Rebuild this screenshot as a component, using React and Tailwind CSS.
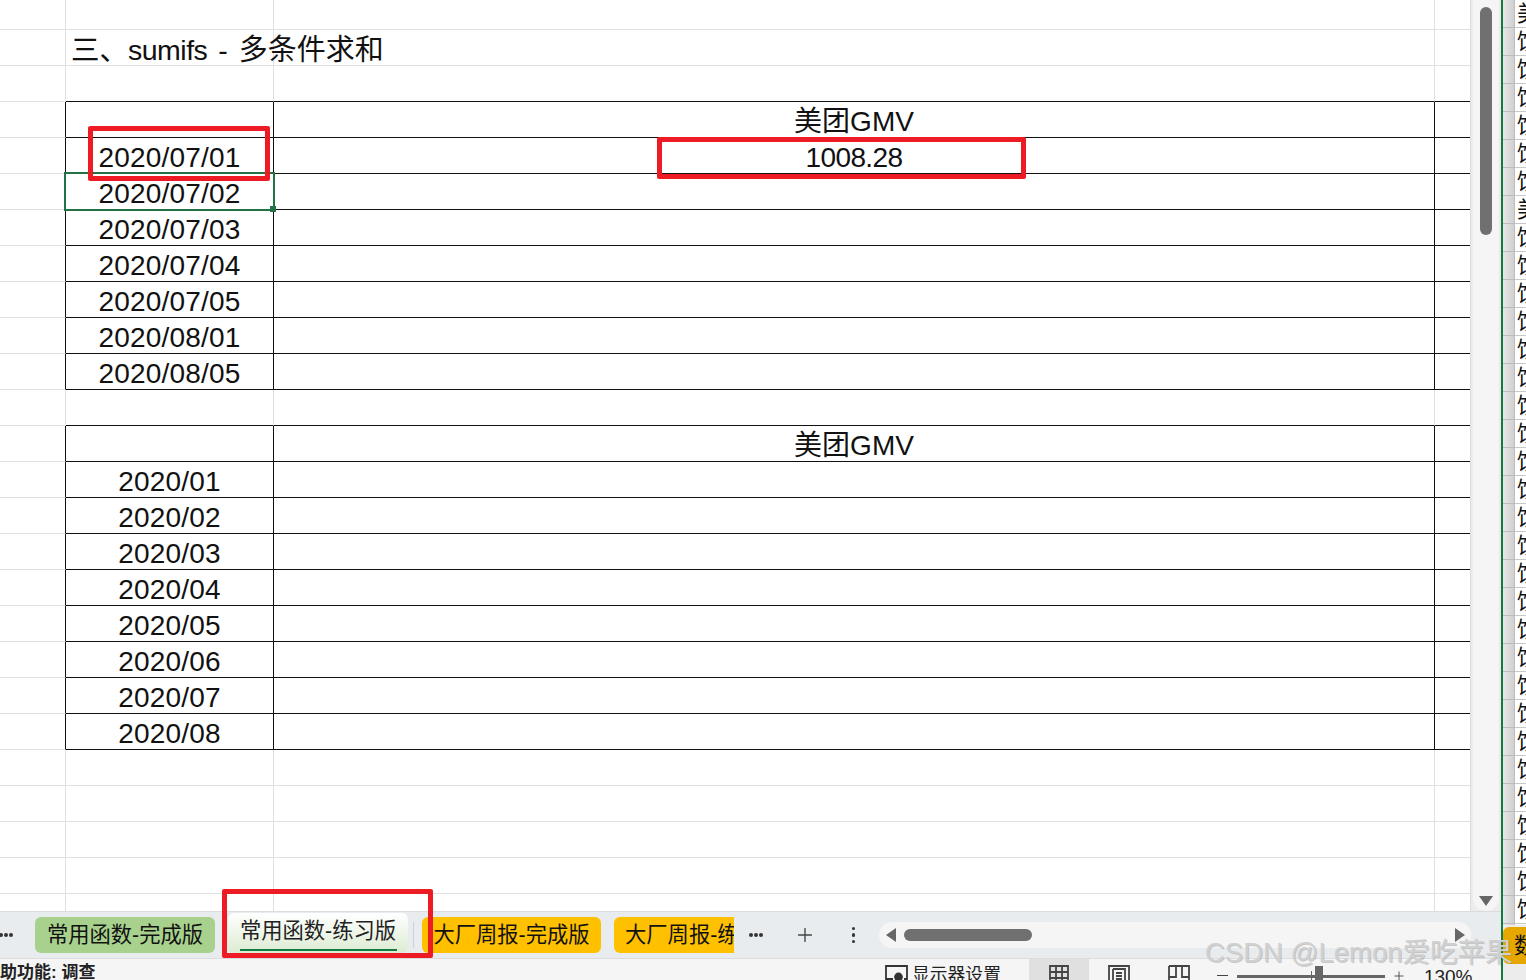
import { Plus } from "lucide-react";

const font = "font-['Liberation_Sans','Noto_Sans_CJK_SC',sans-serif]";

// one spreadsheet row: index cell, date cell, value cell, spill cell
const Row = ({ height = "h-[36px]", line = "gray", table = false, a, b }) => {
  const bottom = line === "black" ? "border-b-[#111]" : "border-b-[#e0e0e0]";
  const side = table ? "border-r-[#111]" : "border-r-[#e0e0e0]";
  return (
    <div className={`flex shrink-0 ${height}`}>
      <div className={`w-[66px] border-b border-b-[#e0e0e0] border-r ${side}`} />
      <div className={`w-[208px] border-b ${bottom} border-r ${side} flex items-end justify-center text-[28px] leading-[30px] tracking-[0.2px] text-[#111]`}>
        {a}
      </div>
      <div className={`w-[1161px] border-b ${bottom} border-r ${side} flex items-end justify-center text-[28px] leading-[30px] text-[#111]`}>
        {b}
      </div>
      <div className={`flex-1 border-b ${bottom}`} />
    </div>
  );
};

const dates = ["2020/07/01", "2020/07/02", "2020/07/03", "2020/07/04", "2020/07/05", "2020/08/01", "2020/08/05"];
const months = ["2020/01", "2020/02", "2020/03", "2020/04", "2020/05", "2020/06", "2020/07", "2020/08"];

const Dots = ({ className }) => (
  <div className={`flex gap-[1.5px] ${className}`}>
    <span className="w-[3.5px] h-[3.5px] rounded-full bg-[#333]" />
    <span className="w-[3.5px] h-[3.5px] rounded-full bg-[#333]" />
    <span className="w-[3.5px] h-[3.5px] rounded-full bg-[#333]" />
  </div>
);

const sidePanelRows = Array.from({ length: 34 }, (_, i) => (i === 0 || i === 7 ? "美" : "饮"));

export default function App() {
  return (
    <div className={`relative flex w-[1526px] h-[980px] overflow-hidden bg-white ${font}`}>
      <div className="flex flex-col w-[1501px] shrink-0">
        <div className="flex h-[912px] shrink-0 border-b border-[#dcdcdc]">
          {/* Sheet */}
          <div className="w-[1470px] flex flex-col overflow-hidden">
            <Row height="h-[30px]" />
            <div className="flex shrink-0 h-[36px] relative">
              <div className="w-[66px] border-b border-r border-[#e0e0e0]" />
              <div className="w-[208px] border-b border-r border-[#e0e0e0]" />
              <div className="w-[1161px] border-b border-r border-[#e0e0e0]" />
              <div className="flex-1 border-b border-[#e0e0e0]" />
              <span className="absolute left-[71px] top-[2px] text-[28.5px] leading-[36px] text-[#111] whitespace-nowrap [word-spacing:3px]">
                三、<span className="tracking-[-0.5px]">sumifs</span> - <span className="text-[29px]">多条件求和</span>
              </span>
            </div>
            <Row line="black" />
            <Row line="black" table b="美团GMV" />
            <Row line="black" table a={dates[0]} b={<span className="tracking-[-0.6px]">1008.28</span>} />
            {dates.slice(1).map((d) => (
              <Row key={d} line="black" table a={d} />
            ))}
            <Row line="black" />
            <Row line="black" table b="美团GMV" />
            {months.map((m) => (
              <Row key={m} line="black" table a={m} />
            ))}
            {[0, 1, 2, 3].map((i) => (
              <Row key={i} />
            ))}
            <Row height="h-[20px]" />
          </div>

          {/* Vertical scrollbar */}
          <div className="flex-1 bg-[#ececec] border-l border-[#dcdcdc] flex justify-center">
            <div className="w-[26px] h-[911px] bg-[#f5f5f5] rounded-b-[13px] flex flex-col items-center justify-between pt-[7px] pb-[5px]">
              <div className="w-[12px] h-[228px] rounded-full bg-[#707070]" />
              <div className="w-0 h-0 border-x-[7px] border-x-transparent border-t-[10px] border-t-[#666]" />
            </div>
          </div>
        </div>

        {/* Sheet tabs */}
        <div className="h-[47px] shrink-0 bg-[#e9ecee] flex items-center overflow-hidden border-b border-[#dcdcdc] text-[21.3px] text-[#111]">
          <Dots className="ml-[-1px] w-[14px] shrink-0" />
          <div className="ml-[22px] w-[180px] h-[36px] pt-[2px] rounded-md bg-[#a9d18e] flex items-center justify-center whitespace-nowrap shrink-0">
            常用函数-完成版
          </div>
          <div className="ml-[13px] w-[180px] h-[40px] mt-[-5px] rounded-md bg-gradient-to-b from-white to-[#dcebd2] flex flex-col items-center justify-between pb-[2px] shrink-0 text-[#222]">
            <span className="whitespace-nowrap leading-[36px]">常用函数-练习版</span>
            <span className="w-[157px] h-[3px] bg-[#107c41]" />
          </div>
          <div className="ml-[5px] w-px h-[26px] bg-[#cfd2d4] shrink-0" />
          <div className="ml-[8px] w-[179px] h-[36px] pt-[2px] rounded-md bg-[#ffc000] flex items-center justify-center whitespace-nowrap shrink-0">
            大厂周报-完成版
          </div>
          <div className="ml-[13px] w-[120px] h-[36px] pt-[2px] rounded-l-md bg-[#ffc000] flex items-center pl-[11px] whitespace-nowrap overflow-hidden shrink-0">
            大厂周报-练习版
          </div>
          <Dots className="ml-[15px] shrink-0" />
          <Plus className="ml-[31px] w-[22px] h-[22px] text-[#444] shrink-0" strokeWidth={1.5} />
          <div className="ml-[36px] flex flex-col gap-[3px] shrink-0">
            <span className="w-[3.5px] h-[3.5px] rounded-full bg-[#333]" />
            <span className="w-[3.5px] h-[3.5px] rounded-full bg-[#333]" />
            <span className="w-[3.5px] h-[3.5px] rounded-full bg-[#333]" />
          </div>
          {/* Horizontal scrollbar */}
          <div className="ml-[24px] w-[592px] h-[26px] rounded-full bg-[#f5f5f5] flex items-center pl-[7px] pr-[6px] shrink-0">
            <div className="w-0 h-0 border-y-[7px] border-y-transparent border-r-[10px] border-r-[#666]" />
            <div className="ml-[8px] w-[128px] h-[12px] rounded-full bg-[#707070]" />
            <div className="ml-auto w-0 h-0 border-y-[7px] border-y-transparent border-l-[10px] border-l-[#666]" />
          </div>
        </div>

        {/* Status bar */}
        <div className="h-[21px] shrink-0 bg-[#f5f5f5] flex overflow-hidden text-[#222]">
          <div className="w-[885px] shrink-0 overflow-hidden">
            <span className="block ml-[-17px] mt-[4px] text-[17px] leading-[20px] font-bold whitespace-nowrap">辅助功能: 调查</span>
          </div>
          <div className="mt-[6px] flex items-start shrink-0">
            <svg width="23" height="20" viewBox="0 0 23 20" fill="none" stroke="#333" strokeWidth="1.8">
              <path d="M8 14H1V1h21v13h-3" />
              <circle cx="13.5" cy="12" r="3.5" fill="#333" />
            </svg>
            <span className="ml-[4px] text-[17.8px] leading-[20px] whitespace-nowrap">显示器设置</span>
          </div>
          <div className="ml-[28px] w-[60px] bg-[#e0e0e0] flex justify-center pt-[6px] shrink-0">
            <svg width="20" height="22" viewBox="0 0 20 22" fill="none" stroke="#444" strokeWidth="1.8">
              <path d="M1 1h18v20H1zM1 7h18M1 13h18M7 1v20M13 1v20" />
            </svg>
          </div>
          <div className="w-[60px] flex justify-center pt-[6px] shrink-0">
            <svg width="22" height="22" viewBox="0 0 22 22" fill="none" stroke="#444" strokeWidth="1.8">
              <path d="M1 1h20v20H1zM5 4h12v17M5 4v17M8 8h6M8 11h6M8 14h6" />
            </svg>
          </div>
          <div className="w-[60px] flex justify-center pt-[6px] shrink-0">
            <svg width="22" height="22" viewBox="0 0 22 22" fill="none" stroke="#444" strokeWidth="1.8">
              <path d="M1 1h20v20M1 1v20M8 1v11H1M14 1v11h7" />
            </svg>
          </div>
          <div className="ml-[8px] mt-[15.5px] w-[11px] h-[1.5px] bg-[#444] shrink-0" />
          <div className="relative ml-[9px] mt-[16px] w-[148px] h-[2.5px] bg-[#666] shrink-0">
            <span className="absolute left-[74px] top-[-4px] w-px h-[9px] bg-[#666]" />
            <span className="absolute left-[78px] top-[-9px] w-[8px] h-[14px] bg-[#666]" />
          </div>
          <Plus className="ml-[7px] mt-[10px] w-[14px] h-[14px] text-[#444] shrink-0" strokeWidth={1.5} />
          <span className="ml-[18px] mt-[7px] text-[19px] leading-[22px] whitespace-nowrap">130%</span>
        </div>
      </div>

      <div className="w-[2px] bg-[#107c41] shrink-0" />

      {/* Neighbouring window */}
      <div className="flex-1 relative overflow-hidden bg-[#ececec]">
        <div className="h-[925px] overflow-hidden bg-white">
          {sidePanelRows.map((c, i) => (
            <div key={i} className="flex h-[28px]">
              <div className="w-[12px] shrink-0 bg-gradient-to-r from-[#e8e8e8] to-[#d0d0d0] border-b border-r border-[#bdbdbd]" />
              <div className="flex-1 border-b border-[#c8c8c8] text-[22px] leading-[28px] pl-[2px] overflow-hidden whitespace-nowrap text-[#111]">
                {c}
              </div>
            </div>
          ))}
        </div>
        <div className="absolute left-0 top-[927px] w-full h-[37px] rounded-l-md bg-[#e6a800] text-[22px] leading-[37px] pl-[11px] whitespace-nowrap text-[#111]">
          数
        </div>
      </div>

      {/* Annotations drawn on the screenshot */}
      <div className="absolute left-[64px] top-[172px] w-[211px] h-[39px] border-2 border-[#217346]" />
      <div className="absolute left-[270px] top-[206px] w-[6px] h-[6px] bg-[#217346]" />
      <div className="absolute left-[88px] top-[126px] w-[182px] h-[55px] border-[5px] border-[#ed1c24] rounded-[2px]" />
      <div className="absolute left-[657px] top-[137px] w-[369px] h-[42px] border-[5px] border-[#ed1c24] rounded-[2px]" />
      <div className="absolute left-[222px] top-[889px] w-[211px] h-[69px] border-[5px] border-[#ed1c24] rounded-[2px]" />
      <span className="absolute left-[1205px] top-[934px] text-[27.5px] leading-[38px] text-[#d0d0d0] whitespace-nowrap [text-shadow:1px_1px_0_#8f8f8f70]">
        CSDN @Lemon爱吃苹果
      </span>
    </div>
  );
}
